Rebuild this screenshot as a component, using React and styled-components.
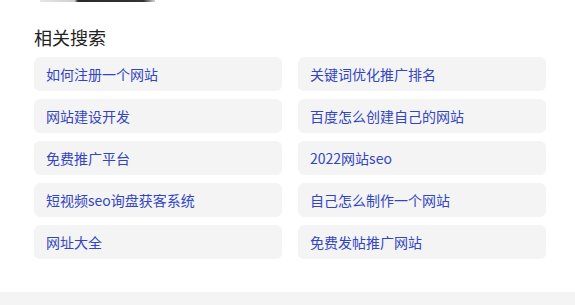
import React from 'react'
import styled, { createGlobalStyle } from 'styled-components'

const GlobalStyle = createGlobalStyle`
  body {
    margin: 0;
    background: #fff;
    font-family: "Noto Sans CJK SC", "Noto Sans", sans-serif;
  }
`

const items = [
  '如何注册一个网站',
  '关键词优化推广排名',
  '网站建设开发',
  '百度怎么创建自己的网站',
  '免费推广平台',
  '2022网站seo',
  '短视频seo询盘获客系统',
  '自己怎么制作一个网站',
  '网址大全',
  '免费发帖推广网站',
]

const Page = styled.div`
  display: flex;
  flex-direction: column;
  min-height: 305px;
`

const ThumbEdge = styled.div`
  margin-left: 40px;
  width: 115px;
  height: 2px;
  background: linear-gradient(90deg, #e6e6e6 0%, #cfcfcf 30%, #2a2a2a 33%, #333 90%, #d8d8d8 100%);
`

const Section = styled.section`
  padding: 23px 29px 33px 34px;
`

const Title = styled.h3`
  margin: 0 0 8px;
  font-size: 18px;
  line-height: 24px;
  font-weight: 400;
  color: #222;
`

const Grid = styled.div`
  display: grid;
  grid-template-columns: 1fr 1fr;
  column-gap: 16px;
  row-gap: 8px;
`

const Item = styled.a`
  display: block;
  height: 34px;
  line-height: 34px;
  padding: 0 12px;
  border-radius: 6px;
  background: #f4f4f5;
  color: #3346c2;
  font-size: 14px;
  text-decoration: none;
  white-space: nowrap;
`

const Footer = styled.div`
  flex: 1;
  background: #f4f4f4;
`

export default function App() {
  return (
    <>
      <GlobalStyle />
      <Page>
        <ThumbEdge />
        <Section>
          <Title>相关搜索</Title>
          <Grid>
            {items.map((t) => (
              <Item key={t} href="#">{t}</Item>
            ))}
          </Grid>
        </Section>
        <Footer />
      </Page>
    </>
  )
}
